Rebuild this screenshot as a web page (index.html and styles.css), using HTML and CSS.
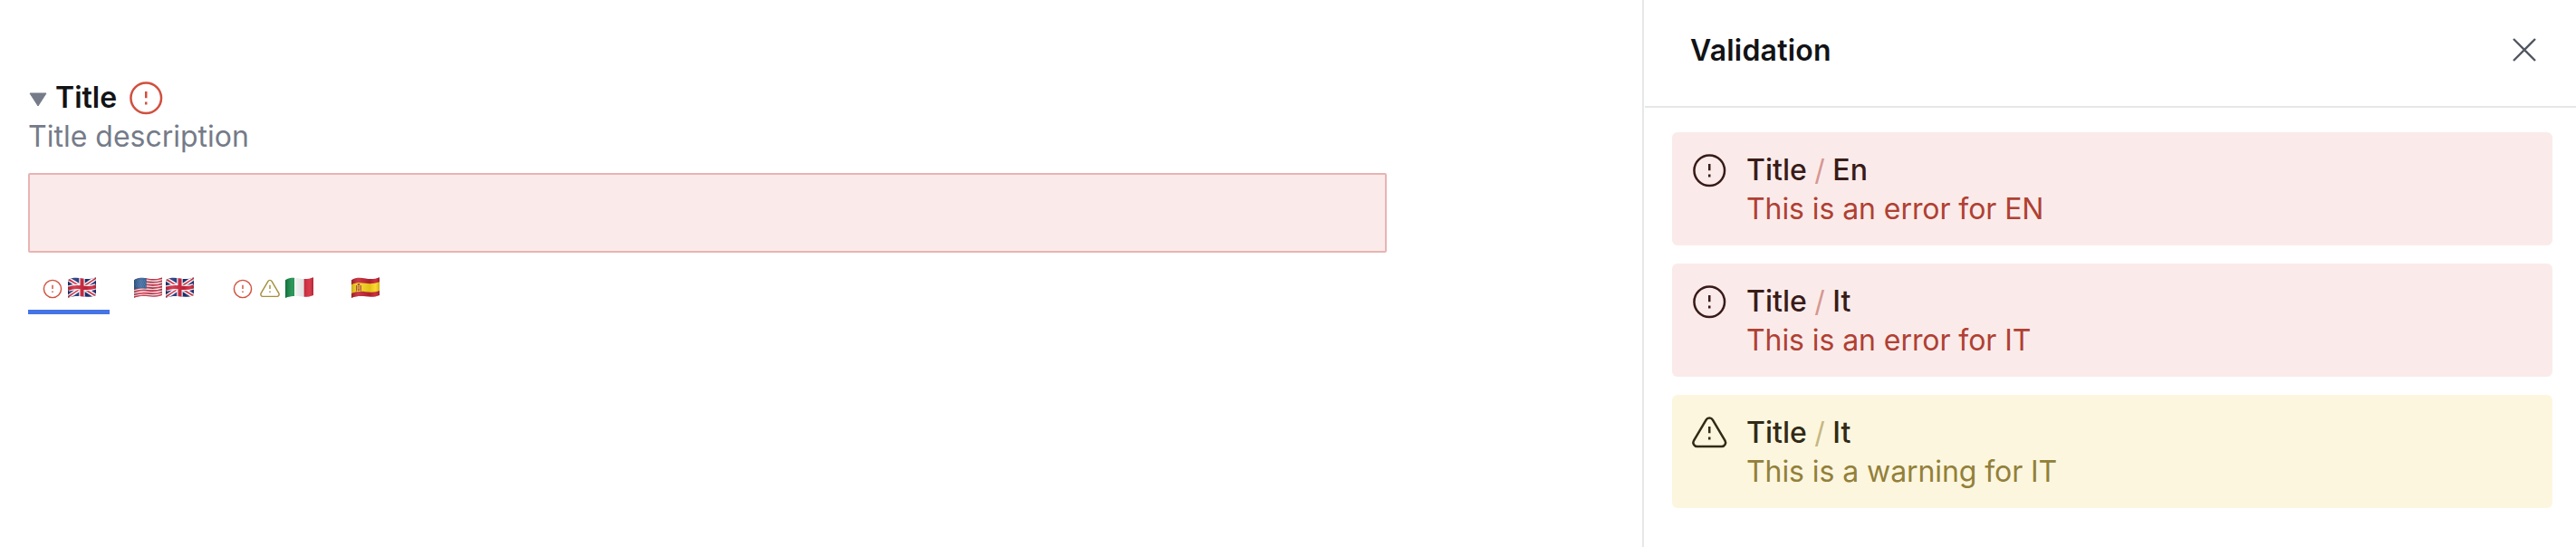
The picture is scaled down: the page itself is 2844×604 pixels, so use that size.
FILE: index.html
```
<!DOCTYPE html>
<html lang="en">
<head>
<meta charset="utf-8">
<title>Validation</title>
<link rel="stylesheet" href="styles.css">
</head>
<body>
<svg class="defs" aria-hidden="true">
  <defs>
    <symbol id="error" viewBox="0 0 25 25">
      <circle cx="12.5" cy="12.5" r="8" fill="none" stroke="currentColor" stroke-width="1.2"/>
      <path d="M12.5 9v3.5M12.5 14.5v1.4" fill="none" stroke="currentColor" stroke-width="1.2"/>
    </symbol>
    <symbol id="warning" viewBox="0 0 25 25">
      <path d="M10.77 5.5a2 2 0 0 1 3.46 0l6.5 11a2 2 0 0 1-1.73 3h-13a2 2 0 0 1-1.73-3z" fill="none" stroke="currentColor" stroke-width="1.2"/>
      <path d="M12.5 9v3.5M12.5 14.5v1.4" fill="none" stroke="currentColor" stroke-width="1.2"/>
    </symbol>
    <clipPath id="wave"><path d="M0 3.2C5 .2 10 .5 15.5 1.5S26 2.2 31 .2V20C26 22.200 21 22 15.500 21.300S5 21 0 23z"/></clipPath>
    <linearGradient id="shade" x1="0" x2="1" y1="0" y2="0">
      <stop offset="0" stop-color="#000" stop-opacity=".2"/>
      <stop offset=".25" stop-color="#fff" stop-opacity=".12"/>
      <stop offset=".65" stop-color="#000" stop-opacity=".1"/>
      <stop offset=".85" stop-color="#fff" stop-opacity=".08"/>
      <stop offset="1" stop-color="#000" stop-opacity=".2"/>
    </linearGradient>
    <symbol id="gb" viewBox="0 0 31 23">
      <g clip-path="url(#wave)">
        <path fill="#1d2f78" d="M0 0h31v23H0z"/>
        <path stroke="#fff" stroke-width="4.500" d="M0 2l31 19M0 22L31 1"/>
        <path stroke="#d0243c" stroke-width="1.500" d="M0 2l31 19M0 22L31 1"/>
        <path stroke="#fff" stroke-width="6.500" fill="none" d="M15.500 0v23M0 12.800Q8 10 15.500 11.500T31 10.300"/>
        <path stroke="#d0243c" stroke-width="4" fill="none" d="M15.500 0v23M0 12.800Q8 10 15.500 11.500T31 10.300"/>
        <path fill="url(#shade)" d="M0 0h31v23H0z"/>
      </g>
    </symbol>
    <symbol id="us" viewBox="0 0 31 23">
      <g clip-path="url(#wave)">
        <path fill="#f4f1f2" d="M0 0h31v23H0z"/>
        <path fill="none" stroke="#cf3048" stroke-width="1.700" d="M0 3.500Q8 .5 15.500 2T31 1M0 6.800Q8 4 15.500 5.300T31 4.200M0 10.100Q8 7.200 15.500 8.500T31 7.400M0 13.300Q8 10.500 15.500 11.700T31 10.600M0 16.300Q8 13.700 15.500 14.800T31 13.600M0 19.300Q8 16.800 15.500 17.900T31 16.700M0 22.200Q8 19.500 15.500 20.800T31 19.500"/>
        <path fill="#2f5c96" d="M0 0h13.700v12.800Q7 11.500 0 13.500z"/>
        <path stroke="#8fabc9" stroke-width=".7" stroke-dasharray=".7 1.300" d="M1 4h12M2 6h11M1 8h12M2 10h11"/>
        <path fill="url(#shade)" d="M0 0h31v23H0z"/>
      </g>
    </symbol>
    <symbol id="it" viewBox="0 0 31 23">
      <g clip-path="url(#wave)">
        <path fill="#fafafa" d="M0 0h31v23H0z"/>
        <path fill="#128a45" d="M0 0h10v23H0z"/>
        <path fill="#d52b3d" d="M20.700 0H31v23H20.700z"/>
        <path fill="url(#shade)" d="M0 0h31v23H0z"/>
      </g>
    </symbol>
    <symbol id="es" viewBox="0 0 31 23">
      <g clip-path="url(#wave)">
        <path fill="#c2202f" d="M0 0h31v23H0z"/>
        <path fill="#fbd51c" d="M0 8.300C5 5.500 10 6 15.500 6.800S26 7 31 5.300V15C26 17 21 17 15.500 16.200S5 16 0 18z"/>
        <path fill="#a8452c" d="M5 9h1v6.500H5zM10 9h1v6.500h-1zM6.600 9.500h2.800v5q-1.400 1.500-2.800 0z"/>
        <path fill="#e4a13a" d="M7.400 10.500h1.200v3H7.400z"/>
        <path fill="#8d3a24" d="M6.700 7.300h2.600v1.600H6.700z"/>
        <path fill="url(#shade)" d="M0 0h31v23H0z"/>
      </g>
    </symbol>
  </defs>
</svg>
<div class="app">
  <main class="form">
    <div class="field-title">
      <svg class="caret" viewBox="0 0 20 16"><path d="M1 1h18l-9 14z"/></svg>
      <span>Title</span>
      <svg class="icon error"><use href="#error"/></svg>
    </div>
    <div class="description">Title description</div>
    <div class="input"></div>
    <div class="tabs">
      <div class="tab active"><svg class="mini error"><use href="#error"/></svg><svg class="flag"><use href="#gb"/></svg></div>
      <div class="tab pair"><svg class="flag"><use href="#us"/></svg><svg class="flag"><use href="#gb"/></svg></div>
      <div class="tab"><svg class="mini error"><use href="#error"/></svg><svg class="mini warning"><use href="#warning"/></svg><svg class="flag"><use href="#it"/></svg></div>
      <div class="tab pair"><svg class="flag"><use href="#es"/></svg></div>
    </div>
  </main>
  <aside class="panel">
    <header class="panel-header">
      <h2>Validation</h2>
      <svg class="close" viewBox="0 0 26 26"><path d="M1 1l24 24M25 1L1 25"/></svg>
    </header>
    <div class="list">
      <div class="card critical">
        <svg class="icon"><use href="#error"/></svg>
        <div class="text"><div class="path">Title <i>/</i> En</div><div class="message">This is an error for EN</div></div>
      </div>
      <div class="card critical">
        <svg class="icon"><use href="#error"/></svg>
        <div class="text"><div class="path">Title <i>/</i> It</div><div class="message">This is an error for IT</div></div>
      </div>
      <div class="card caution">
        <svg class="icon"><use href="#warning"/></svg>
        <div class="text"><div class="path">Title <i>/</i> It</div><div class="message">This is a warning for IT</div></div>
      </div>
    </div>
  </aside>
</div>
</body>
</html>
```
FILE: styles.css
```
* { box-sizing: border-box; }
body { margin: 0; background: #fff; color: #121316; font: 400 32px/43px Inter, sans-serif; }
svg { display: block; flex: none; }
.defs { position: absolute; width: 0; height: 0; }
.app { display: flex; height: 604px; overflow: hidden; }
.form { width: 1813px; padding: 86px 0 0 31px; }
.field-title { display: flex; align-items: center; height: 43px; font-weight: 600; }
.caret { width: 20px; height: 16px; margin: 4px 9px 0 1px; fill: #757b89; stroke: #757b89; stroke-width: 1; stroke-linejoin: round; }
.icon { width: 52.5px; height: 52.5px; }
.field-title .icon { margin: 1px 0 0 6px; }
.error { color: #d1503f; }
.warning { color: #a58f3c; }
.description { color: #757b89; height: 42px; }
.input { width: 1500px; height: 88px; margin-top: 20px; border: 2px solid #e9b3b1; border-radius: 2px; background: #faebea; }
.tabs { display: flex; gap: 12px; margin-top: 15px; }
.tab { display: flex; align-items: center; height: 53px; padding: 2px 15px 0 12px; border-bottom: 5px solid transparent; }
.pair { gap: 4px; padding-left: 15px; }
.active { border-color: #4574e6; }
.mini { width: 30px; height: 30px; }
.flag { width: 31px; height: 23px; margin: -3px 0 0 2px; }
.pair .flag { margin-left: 0; }
.panel { flex: 1; border-left: 2px solid #e6e7e8; }
.panel-header { display: flex; align-items: center; justify-content: space-between; height: 119px; padding: 0 44px 7px 50px; margin-left: 1px; border-bottom: 2px solid #e6e7e8; }
h2 { margin: 0; padding-top: 1px; font-size: 32px; font-weight: 600; letter-spacing: .2px; }
.close { width: 26px; height: 26px; stroke: #515761; stroke-width: 2.400; fill: none; }
.list { display: flex; flex-direction: column; gap: 20px; padding: 27px 26px 0 31px; }
.card { display: flex; height: 125px; padding: 20px 15px; border-radius: 6px; }
.card .icon { margin: -4.500px 14.500px 0 0; }
.message { letter-spacing: -.08px; }
.path { font-weight: 500; }
.path i { font-style: normal; font-weight: 400; }
.critical { background: #faebea; color: #391b18; }
.critical i { color: #d69791; }
.critical .message { color: #b04033; }
.caution { background: #fdf6de; color: #312a16; }
.caution i { color: #c5b783; }
.caution .message { color: #92803a; }
```
